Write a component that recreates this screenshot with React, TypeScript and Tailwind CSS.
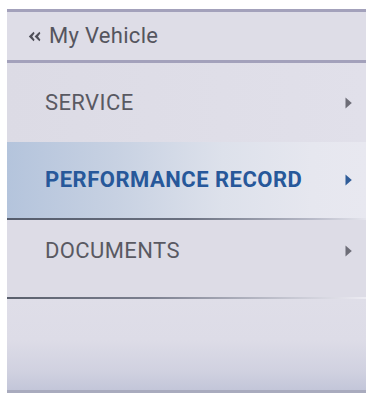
import React from "react";

function Arrow({ color }: { color: string }) {
  return (
    <svg width="7" height="12" viewBox="0 0 7 12" className="block">
      <path d="M0.5 0.5 L6.8 6 L0.5 11.5 Z" fill={color} />
    </svg>
  );
}

function BackIcon() {
  return (
    <svg width="13" height="11" viewBox="0 0 13 11" className="block">
      <path d="M5.6 0.8 L0.8 5.5 L5.6 10.2 L6.6 8.8 L4.2 5.5 L6.6 2.2 Z" fill="#4f4f58" />
      <path d="M11.4 0.8 L6.6 5.5 L11.4 10.2 L12.4 8.8 L10 5.5 L12.4 2.2 Z" fill="#4f4f58" />
    </svg>
  );
}

export default function App() {
  const font = { fontFamily: "Roboto, 'Liberation Sans', sans-serif" };
  return (
    <div className="w-[370px] h-[396px] bg-white pt-[9px] pl-[7px]" style={font}>
      <div className="w-[359px] h-[384px] bg-[#dddce6] flex flex-col">
        {/* header */}
        <div className="h-[54px] border-t-[3px] border-b-[3px] border-[#a3a1bb] flex items-center pl-[21px] gap-[8px] bg-[#dedde7]">
          <BackIcon />
          <span className="text-[22px] leading-none text-[#55555e] tracking-[0.3px]">My Vehicle</span>
        </div>
        {/* service */}
        <div className="h-[79px] flex items-center justify-between pl-[38px] pr-[14px] bg-[linear-gradient(90deg,#dcdbe5_0%,#dfdee8_60%,#e1e0ea_100%)]">
          <span className="text-[22px] leading-none text-[#595962] tracking-[0.4px]">SERVICE</span>
          <Arrow color="#6d6d77" />
        </div>
        {/* performance record */}
        <div className="h-[76px] flex items-center justify-between pl-[38px] pr-[14px] bg-[linear-gradient(90deg,#b4c4dc_0%,#c7d1e2_30%,#dde1eb_60%,#e6e7ef_85%,#e8e8f0_100%)]">
          <span className="text-[22px] leading-none font-bold text-[#27589a] tracking-[0.5px]">PERFORMANCE RECORD</span>
          <Arrow color="#2f5c98" />
        </div>
        <div className="h-[2px] bg-[linear-gradient(90deg,#555c6c_0%,#6a7080_50%,#b8bac8_85%,#e4e4ec_100%)]" />
        {/* documents */}
        <div className="h-[77px] flex items-start justify-between pl-[38px] pr-[14px] pt-[20px] bg-[#dddce6]">
          <span className="text-[22px] leading-none text-[#595962] tracking-[0.4px]">DOCUMENTS</span>
          <div className="pt-[5px]">
            <Arrow color="#6d6d77" />
          </div>
        </div>
        <div className="h-[2px] bg-[linear-gradient(90deg,#595f6c_0%,#7c8090_40%,#c8c9d4_80%,#ecebf2_100%)]" />
        {/* empty */}
        <div className="flex-1 bg-[linear-gradient(180deg,#dfdee8_0%,#dddce7_45%,#d0d1e0_80%,#c3c6d9_100%)] border-b-[3px] border-[#a9abbe]" />
      </div>
    </div>
  );
}
